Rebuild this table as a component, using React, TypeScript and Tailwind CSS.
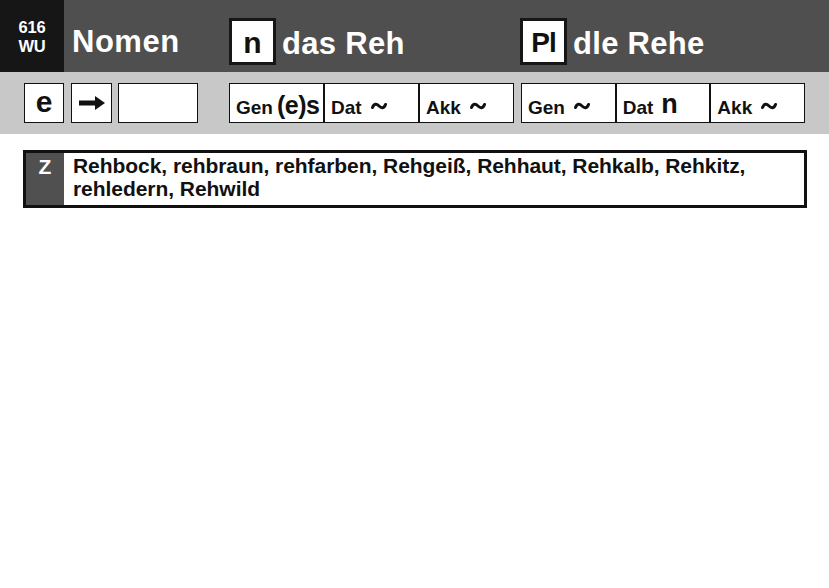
import React from "react";

const Tilde = () => (
  <svg width="16" height="8" viewBox="0 0 16 8" className="block self-end mb-[7px] ml-[9px]">
    <path d="M1.5 5.5 C3 1.5 5.5 1.5 8 4 C10.5 6.5 13 6.5 14.5 2.5" fill="none" stroke="#111" strokeWidth="3" strokeLinecap="round" />
  </svg>
);

const Arrow = () => (
  <svg width="26" height="14" viewBox="0 0 26 14">
    <rect x="0" y="4.5" width="17" height="5" fill="#111" />
    <polygon points="16,0 26,7 16,14" fill="#111" />
  </svg>
);

function Cell({ children, first }: { children: React.ReactNode; first?: boolean }) {
  return (
    <div className={`flex-1 h-full flex items-end pb-[5px] pl-[6px] ${first ? "" : "border-l-2 border-[#111]"}`}>
      {children}
    </div>
  );
}

const Lbl = ({ t }: { t: string }) => <span className="text-[19px] font-bold leading-none">{t}</span>;

export default function App() {
  return (
    <div className="w-[829px] h-[588px] bg-white font-['Liberation_Sans',Arial,sans-serif] text-[#111]">
      {/* header */}
      <div className="flex h-[72px] bg-[#4f4f4f]">
        <div className="w-[64px] h-full bg-[#161616] flex flex-col items-center justify-center pt-[1px] text-white font-bold text-[16.5px] leading-[18.5px] tracking-[-0.2px]">
          <span>616</span>
          <span>WU</span>
        </div>
        <div className="w-[165px] flex items-center pl-[8px] pt-[13px] text-white font-bold text-[31px] tracking-[0.5px]">
          Nomen
        </div>
        <div className="w-[291px] flex items-start pt-[18px]">
          <div className="w-[47px] h-[47px] bg-white border-[3px] border-[#161616] flex items-center justify-center text-[30px] font-bold pt-[2px]">
            n
          </div>
          <span className="ml-[6px] text-white font-bold text-[31px] leading-[47px] pt-[2px] tracking-[0.3px]">das Reh</span>
        </div>
        <div className="flex items-start pt-[18px]">
          <div className="w-[47px] h-[47px] bg-white border-[3px] border-[#161616] flex items-center justify-center text-[28px] font-bold pt-[2px] tracking-[-1px]">
            Pl
          </div>
          <span className="ml-[6px] text-white font-bold text-[31px] leading-[47px] pt-[2px] tracking-[0.3px]">dle Rehe</span>
        </div>
      </div>

      {/* grammar band */}
      <div className="flex h-[62px] bg-[#c8c8c8] pl-[24px] pt-[11px]">
        <div className="w-[40px] h-[40px] bg-white border border-[#111] flex items-center justify-center text-[30px] font-bold leading-none pb-[2px]">
          e
        </div>
        <div className="ml-[7px] w-[41px] h-[40px] bg-white border border-[#111] flex items-center justify-center">
          <Arrow />
        </div>
        <div className="ml-[6px] w-[80px] h-[40px] bg-white border border-[#111]" />

        <div className="ml-[31px] w-[285px] h-[40px] bg-white border border-[#111] flex">
          <Cell first>
            <Lbl t="Gen" />
            <span className="ml-[4px] text-[25px] font-bold leading-none tracking-[-0.5px] mb-[-1px]">(e)s</span>
          </Cell>
          <Cell>
            <Lbl t="Dat" />
            <Tilde />
          </Cell>
          <Cell>
            <Lbl t="Akk" />
            <Tilde />
          </Cell>
        </div>

        <div className="ml-[7px] w-[284px] h-[40px] bg-white border border-[#111] flex">
          <Cell first>
            <Lbl t="Gen" />
            <Tilde />
          </Cell>
          <Cell>
            <Lbl t="Dat" />
            <span className="ml-[8px] text-[27px] font-bold leading-none mb-[-1px]">n</span>
          </Cell>
          <Cell>
            <Lbl t="Akk" />
            <Tilde />
          </Cell>
        </div>
      </div>

      {/* Z box */}
      <div className="ml-[23px] mt-[16px] w-[784px] h-[58px] border-[3px] border-[#111] flex">
        <div className="w-[38px] h-full bg-[#505050] flex justify-center pt-[3px] text-white font-bold text-[21px] leading-[22px]">
          Z
        </div>
        <div className="pl-[9px] pt-[1px] text-[21px] font-bold leading-[23px] tracking-[-0.05px]">
          Rehbock, rehbraun, rehfarben, Rehgeiß, Rehhaut, Rehkalb, Rehkitz,
          <br />
          rehledern, Rehwild
        </div>
      </div>
    </div>
  );
}
